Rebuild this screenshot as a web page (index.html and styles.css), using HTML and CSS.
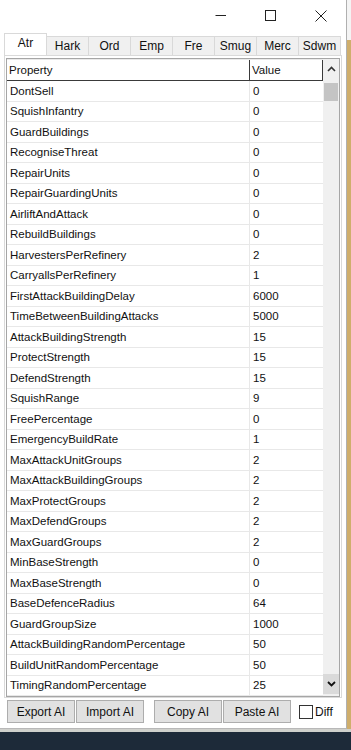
FILE: index.html
```html
<!DOCTYPE html>
<html lang="en">
<head>
    <meta charset="UTF-8">
    <meta name="viewport" content="width=device-width, initial-scale=1.0">
    <title>AI Editor</title>
    <link rel="stylesheet" href="styles.css">
</head>
<body>
    <div class="screen">
        <div class="top">
            <div class="window">
                <div class="titlebar">
                    <div class="caption-btn">
                        <svg width="12" height="12" viewBox="0 0 12 12"><line x1="0.5" y1="5.5" x2="11" y2="5.5" stroke="#222" stroke-width="1"/></svg>
                    </div>
                    <div class="caption-btn">
                        <svg width="12" height="12" viewBox="0 0 12 12"><rect x="0.5" y="0.5" width="10" height="10" fill="none" stroke="#222" stroke-width="1"/></svg>
                    </div>
                    <div class="caption-btn">
                        <svg width="12" height="12" viewBox="0 0 12 12"><path d="M0.5 0.5 L11.5 11.5 M11.5 0.5 L0.5 11.5" stroke="#222" stroke-width="1"/></svg>
                    </div>
                </div>

                <div class="tabs">
                    <div class="tab selected">Atr</div>
                    <div class="tab">Hark</div>
                    <div class="tab">Ord</div>
                    <div class="tab">Emp</div>
                    <div class="tab">Fre</div>
                    <div class="tab">Smug</div>
                    <div class="tab">Merc</div>
                    <div class="tab">Sdwm</div>
                </div>

                <div class="panel">
                    <div class="listview">
                        <div class="grid">
                            <div class="row head">
                                <div class="cell">Property</div>
                                <div class="cell">Value</div>
                            </div>
                            <div class="row"><div class="cell">DontSell</div><div class="cell">0</div></div>
                            <div class="row"><div class="cell">SquishInfantry</div><div class="cell">0</div></div>
                            <div class="row"><div class="cell">GuardBuildings</div><div class="cell">0</div></div>
                            <div class="row"><div class="cell">RecogniseThreat</div><div class="cell">0</div></div>
                            <div class="row"><div class="cell">RepairUnits</div><div class="cell">0</div></div>
                            <div class="row"><div class="cell">RepairGuardingUnits</div><div class="cell">0</div></div>
                            <div class="row"><div class="cell">AirliftAndAttack</div><div class="cell">0</div></div>
                            <div class="row"><div class="cell">RebuildBuildings</div><div class="cell">0</div></div>
                            <div class="row"><div class="cell">HarvestersPerRefinery</div><div class="cell">2</div></div>
                            <div class="row"><div class="cell">CarryallsPerRefinery</div><div class="cell">1</div></div>
                            <div class="row"><div class="cell">FirstAttackBuildingDelay</div><div class="cell">6000</div></div>
                            <div class="row"><div class="cell">TimeBetweenBuildingAttacks</div><div class="cell">5000</div></div>
                            <div class="row"><div class="cell">AttackBuildingStrength</div><div class="cell">15</div></div>
                            <div class="row"><div class="cell">ProtectStrength</div><div class="cell">15</div></div>
                            <div class="row"><div class="cell">DefendStrength</div><div class="cell">15</div></div>
                            <div class="row"><div class="cell">SquishRange</div><div class="cell">9</div></div>
                            <div class="row"><div class="cell">FreePercentage</div><div class="cell">0</div></div>
                            <div class="row"><div class="cell">EmergencyBuildRate</div><div class="cell">1</div></div>
                            <div class="row"><div class="cell">MaxAttackUnitGroups</div><div class="cell">2</div></div>
                            <div class="row"><div class="cell">MaxAttackBuildingGroups</div><div class="cell">2</div></div>
                            <div class="row"><div class="cell">MaxProtectGroups</div><div class="cell">2</div></div>
                            <div class="row"><div class="cell">MaxDefendGroups</div><div class="cell">2</div></div>
                            <div class="row"><div class="cell">MaxGuardGroups</div><div class="cell">2</div></div>
                            <div class="row"><div class="cell">MinBaseStrength</div><div class="cell">0</div></div>
                            <div class="row"><div class="cell">MaxBaseStrength</div><div class="cell">0</div></div>
                            <div class="row"><div class="cell">BaseDefenceRadius</div><div class="cell">64</div></div>
                            <div class="row"><div class="cell">GuardGroupSize</div><div class="cell">1000</div></div>
                            <div class="row"><div class="cell">AttackBuildingRandomPercentage</div><div class="cell">50</div></div>
                            <div class="row"><div class="cell">BuildUnitRandomPercentage</div><div class="cell">50</div></div>
                            <div class="row"><div class="cell">TimingRandomPercentage</div><div class="cell">25</div></div>
                        </div>

                        <div class="scrollbar">
                            <div class="arrow">
                                <svg width="9" height="6" viewBox="0 0 9 6"><polyline points="1,5 4.5,1.5 8,5" fill="none" stroke="#333" stroke-width="1.6"/></svg>
                            </div>
                            <div class="track">
                                <div class="thumb"></div>
                            </div>
                            <div class="arrow down">
                                <svg width="9" height="6" viewBox="0 0 9 6"><polyline points="1,1 4.5,4.5 8,1" fill="none" stroke="#111" stroke-width="1.8"/></svg>
                            </div>
                        </div>
                    </div>
                </div>

                <div class="actions">
                    <button class="btn">Export AI</button>
                    <button class="btn">Import AI</button>
                    <button class="btn spaced">Copy AI</button>
                    <button class="btn">Paste AI</button>
                    <label class="check"><span class="box"></span>Diff</label>
                </div>
            </div>
            <div class="wallpaper"></div>
        </div>
        <div class="band"></div>
        <div class="taskbar"></div>
    </div>
</body>
</html>
```

FILE: styles.css
```css
body {
    margin: 0;
    width: 351px;
    height: 750px;
    overflow: hidden;
    font-family: "Liberation Sans", Arial, sans-serif;
    font-size: 11.5px;
    color: #111;
}

.screen {
    display: flex;
    flex-direction: column;
    height: 750px;
}

.top {
    display: flex;
    height: 729px;
}

.window {
    width: 346px;
    border-right: 1px solid #b0b0b0;
    border-bottom: 1px solid #b8b8b8;
    background: #fff;
    display: flex;
    flex-direction: column;
}

.wallpaper {
    flex: 1;
    background: linear-gradient(#f4f4f4 0 40px, #cfae6c 40px);
}

.band {
    height: 3px;
    background: #cfd0cc;
}

.taskbar {
    flex: 1;
    background: #1d2a39;
}

/* title bar */
.titlebar {
    height: 33px;
    display: flex;
    justify-content: flex-end;
}

.caption-btn {
    width: 50px;
    display: flex;
    justify-content: center;
    padding-top: 10px;
    box-sizing: border-box;
}

/* tabs */
.tabs {
    height: 22px;
    display: flex;
    align-items: flex-end;
    padding-left: 4px;
}

.tab {
    width: 43px;
    height: 19px;
    margin-left: -1px;
    box-sizing: border-box;
    border: 1px solid #d9d9d9;
    border-bottom: none;
    background: #f0f0f0;
    display: flex;
    justify-content: center;
    align-items: center;
    font-size: 12px;
    color: #111;
}

.tab.selected {
    margin-left: 0;
    height: 22px;
    background: #fff;
    position: relative;
    z-index: 1;
    padding-bottom: 3px;
}

/* tab page */
.panel {
    margin: 0 4px;
    border: 1px solid #dadada;
    padding: 2px 1px 0;
}

.listview {
    height: 639px;
    box-sizing: border-box;
    border: 1px solid #a6a6a6;
    display: flex;
}

.grid {
    width: 316px;
}

.row {
    display: grid;
    grid-template-columns: 243px 73px;
    height: 20.5px;
    box-sizing: border-box;
    border-bottom: 1px solid #e8e8e8;
}

.cell {
    padding-left: 3px;
    display: flex;
    align-items: center;
    white-space: nowrap;
}

.row .cell:first-child {
    border-right: 1px solid #e8e8e8;
}

.row.head {
    height: 22px;
    border-top: 1px solid #eaeaea;
    border-bottom: 1px solid #3a3a3a;
}

.row.head .cell {
    border-right: 1px solid #3a3a3a;
    padding-left: 2px;
}

/* scroll bar */
.scrollbar {
    flex: 1;
    background: #f0f0f0;
    display: flex;
    flex-direction: column;
}

.arrow {
    height: 20px;
    display: flex;
    justify-content: center;
    align-items: center;
}

.arrow.down {
    background: #dadada;
    margin-bottom: 2px;
}

.track {
    flex: 1;
    padding: 4px 1px 0;
}

.thumb {
    height: 18px;
    background: #c4c4c4;
}

/* bottom buttons */
.actions {
    display: flex;
    align-items: center;
    gap: 1px;
    padding: 2px 0 0 7px;
}

.btn {
    width: 68px;
    height: 23px;
    border: 1px solid #adadad;
    background: #e1e1e1;
    font-family: "Liberation Sans", Arial, sans-serif;
    font-size: 12px;
    color: #111;
    padding: 0;
}

.btn.spaced {
    margin-left: 9px;
}

.check {
    display: flex;
    align-items: center;
    margin-left: 7px;
    font-size: 12px;
    color: #111;
}

.box {
    width: 14px;
    height: 14px;
    box-sizing: border-box;
    border: 1px solid #333;
    background: #fff;
    margin-right: 2px;
}
```
